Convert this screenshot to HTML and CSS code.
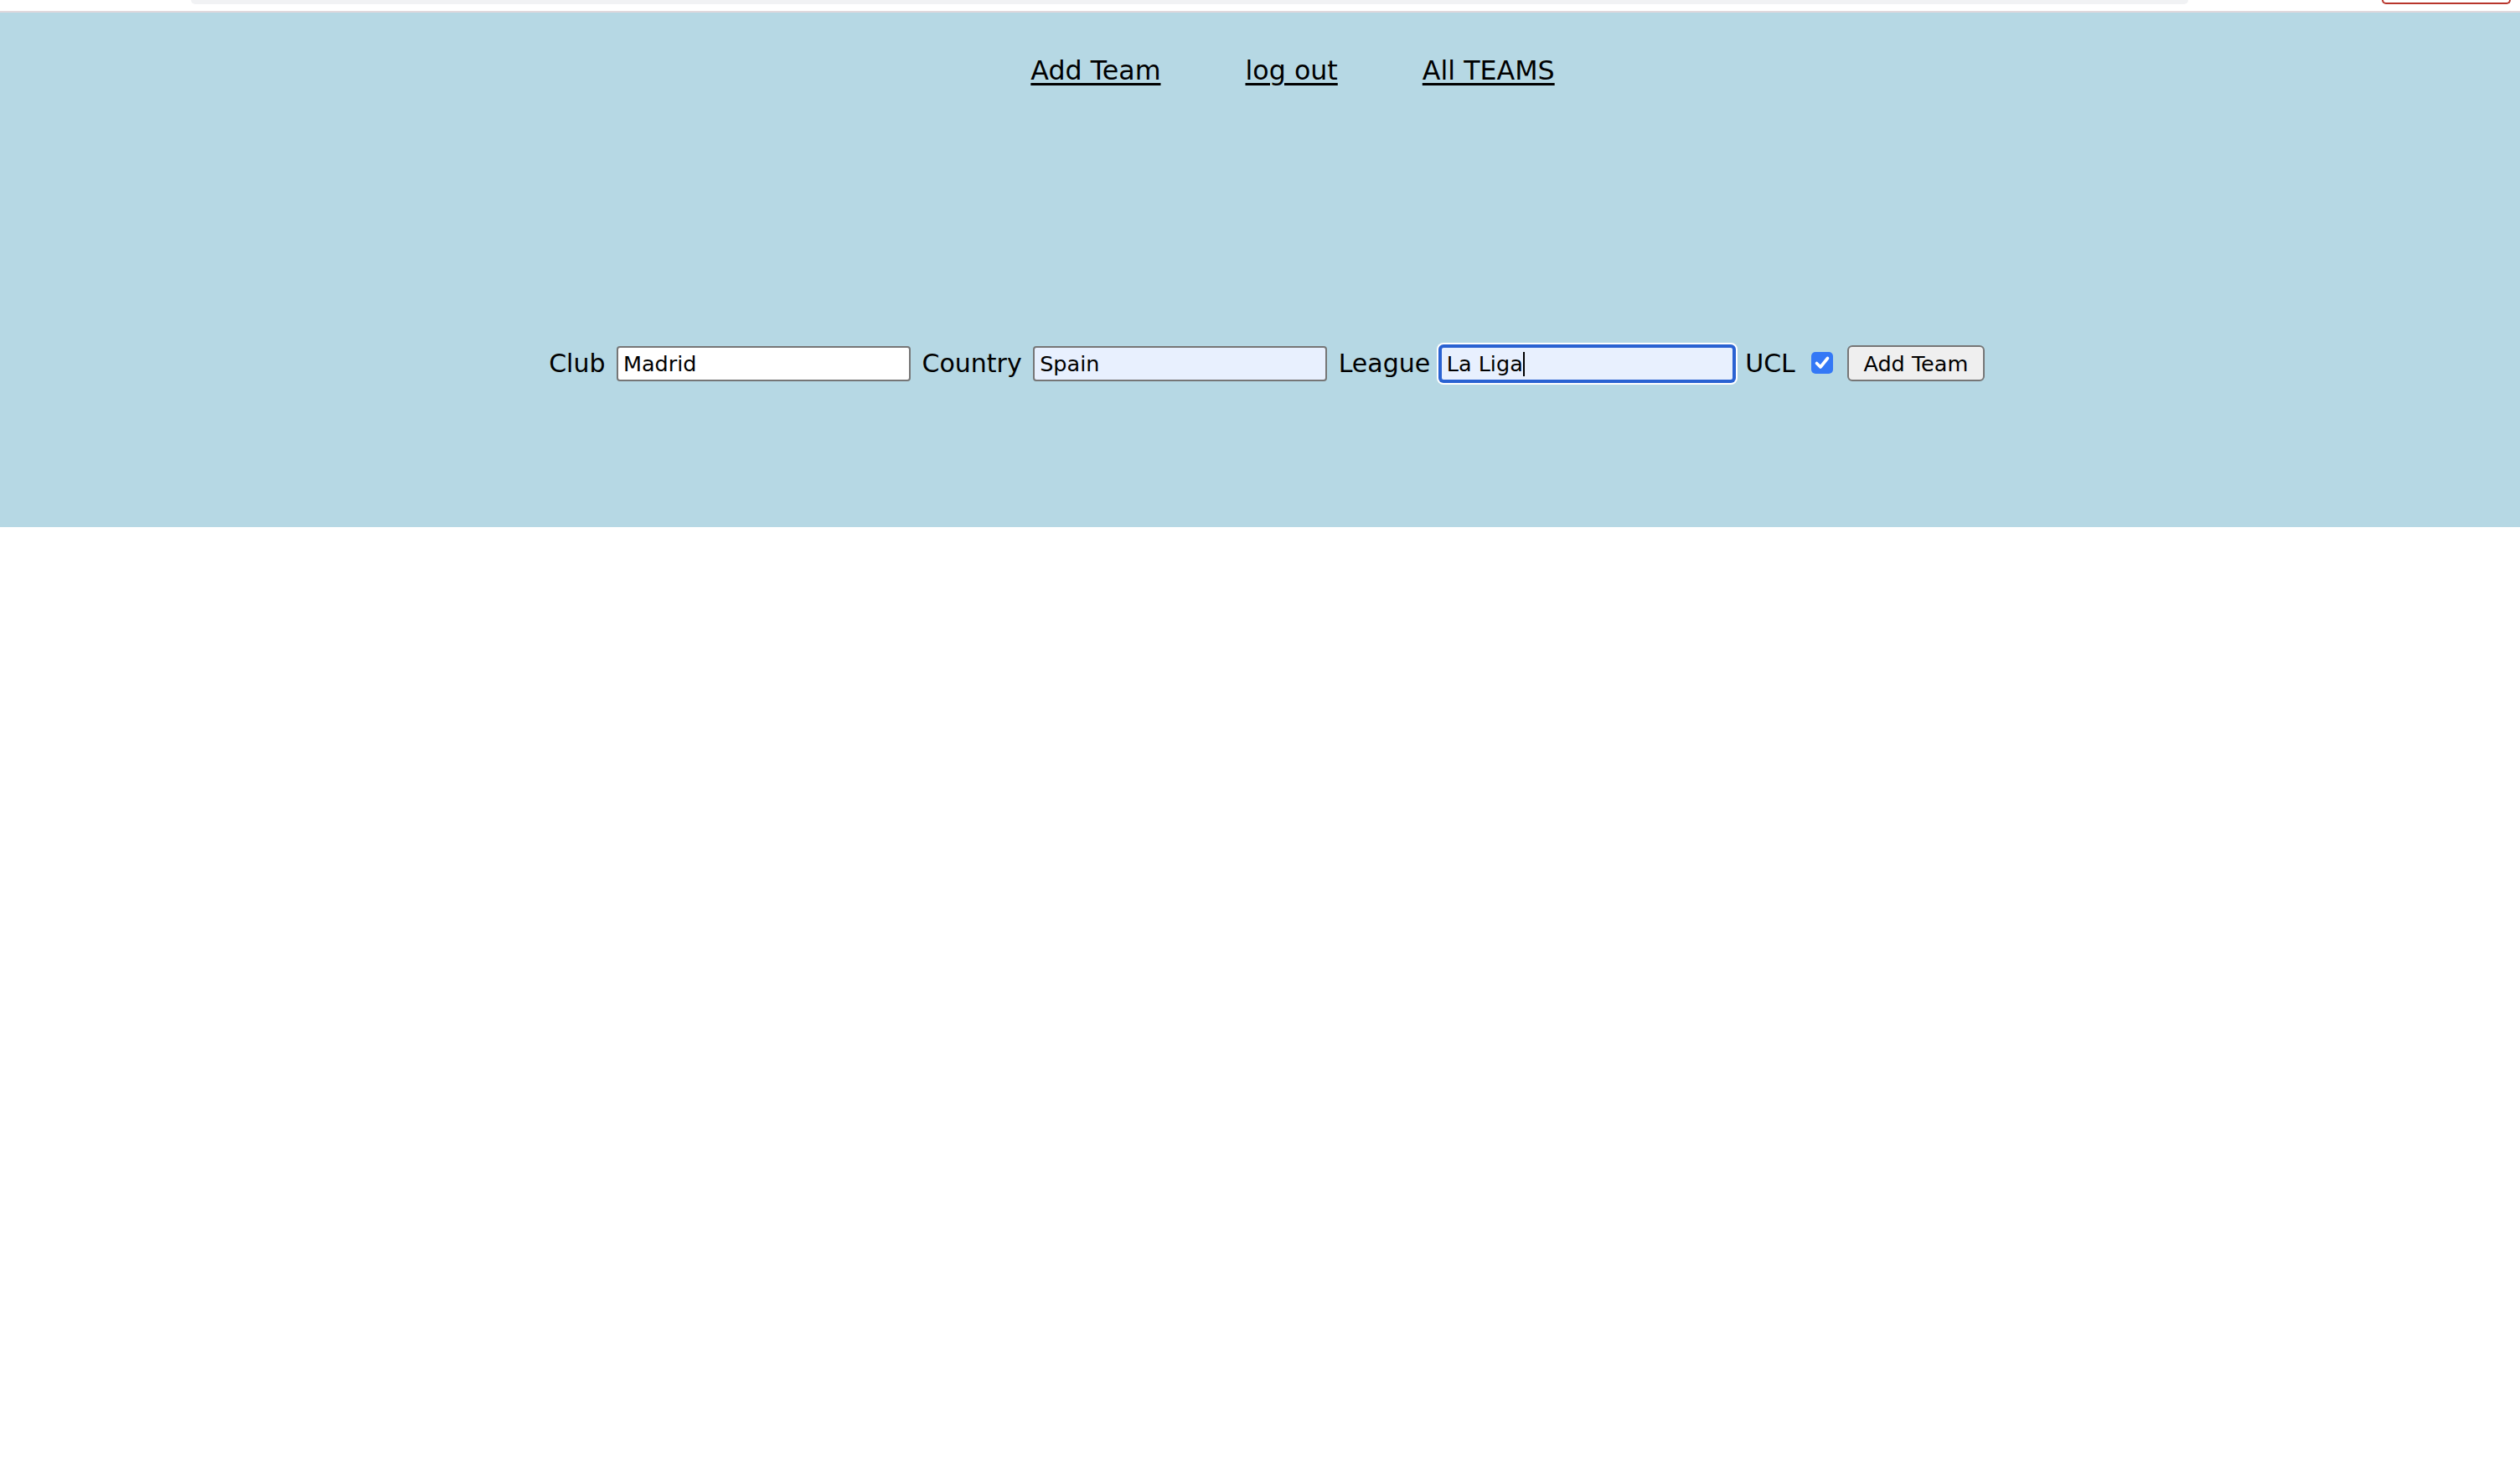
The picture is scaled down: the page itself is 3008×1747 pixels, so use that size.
FILE: index.html
```html
<!DOCTYPE html>
<html>
<head>
<meta charset="utf-8">
<title>Add Team</title>
<link rel="stylesheet" href="styles.css">
</head>
<body>
<div class="topbar">
  <div class="urlbar"></div>
  <div class="redpill"></div>
</div>
<div class="divider"></div>
<main class="main">
  <ul class="nav">
    <li><a href="#">Add Team</a></li>
    <li><a href="#">log out</a></li>
    <li><a href="#">All TEAMS</a></li>
  </ul>
  <form class="form">
    <label class="lbl" for="club">Club</label>
    <input class="field" id="club" type="text" value="Madrid">
    <label class="lbl" for="country">Country</label>
    <input class="field autofill" id="country" type="text" value="Spain">
    <label class="lbl" for="league">League</label>
    <span class="focuswrap">
      <input class="field autofill focused" id="league" type="text" value="La Liga">
      <span class="caret"></span>
    </span>
    <label class="lbl" for="ucl">UCL</label>
    <span class="check" id="ucl">
      <svg viewBox="0 0 26 26" width="26" height="26"><path d="M6.5 13.5 L11 18 L19.5 7.5" fill="none" stroke="#fff" stroke-width="3.6" stroke-linecap="round" stroke-linejoin="round"/></svg>
    </span>
    <button class="btn" type="button">Add Team</button>
  </form>
</main>
</body>
</html>
```

FILE: styles.css
```css
html, body {
  margin: 0;
  padding: 0;
  background: #ffffff;
}
body {
  font-family: "DejaVu Sans", Verdana, sans-serif;
  color: #000;
}
.topbar {
  height: 13px;
  display: flex;
  align-items: flex-start;
  padding-left: 228px;
  padding-right: 11px;
  background: #fff;
}
.urlbar {
  width: 2384px;
  height: 5px;
  background: #f1f2f4;
  border-radius: 0 0 14px 14px;
}
.redpill {
  margin-left: auto;
  width: 150px;
  height: 3px;
  border: 2px solid #b8352b;
  border-top: none;
  border-radius: 0 0 10px 10px;
}
.divider {
  height: 2px;
  background: #e0d8dc;
}
.main {
  height: 614px;
  background: #b6d8e4;
  padding-top: 50px;
  box-sizing: border-box;
}
.nav {
  list-style: none;
  margin: 0;
  padding: 0 0 0 78px;
  display: flex;
  justify-content: center;
  gap: 101px;
  font-size: 31.7px;
  line-height: 38px;
}
.nav a {
  color: #000;
  text-decoration: underline;
  text-decoration-thickness: 3px;
  text-underline-offset: 4px;
}
.form {
  margin: 309px 0 0;
  padding-left: 16px;
  display: flex;
  justify-content: center;
  align-items: center;
  gap: 13.5px;
}
.lbl {
  font-size: 30px;
  line-height: 38px;
}
.field {
  width: 351px;
  height: 42px;
  box-sizing: border-box;
  border: 2px solid #767676;
  border-radius: 4px;
  padding: 0 6px;
  margin: 0;
  background: #fff;
  font-family: "DejaVu Sans", Verdana, sans-serif;
  font-size: 25.5px;
  color: #000;
  outline: none;
}
.autofill {
  background: #e8f0fe;
}
.focuswrap {
  position: relative;
  display: block;
  margin-left: -2px;
}
.focused {
  border-color: #2a62d2;
  box-shadow: 0 0 0 2px #2a62d2, 0 0 0 4px #ffffff;
}
.caret {
  position: absolute;
  left: 99px;
  top: 7px;
  width: 2px;
  height: 29px;
  background: #000;
}
.check {
  display: block;
  width: 26px;
  height: 26px;
  border-radius: 5px;
  background: #3478f6;
  margin: 0 3px 0 6px;
  position: relative;
  top: -1px;
}
.check svg {
  display: block;
}
.btn {
  width: 164px;
  height: 43px;
  box-sizing: border-box;
  border: 2px solid #767676;
  border-radius: 6px;
  background: #efefef;
  font-family: "DejaVu Sans", Verdana, sans-serif;
  font-size: 25.5px;
  color: #000;
  padding: 0;
  margin: 0;
}
```
